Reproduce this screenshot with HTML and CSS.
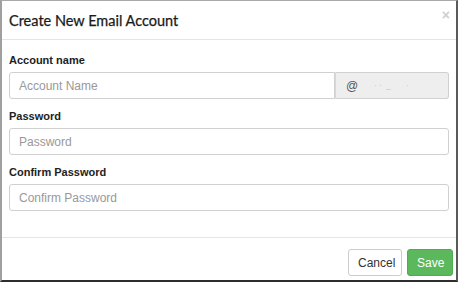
FILE: index.html
```html
<!DOCTYPE html>
<html lang="en">
<head>
    <meta charset="UTF-8">
    <meta name="viewport" content="width=device-width, initial-scale=1.0">
    <title>Create New Email Account</title>
    <link rel="stylesheet" href="styles.css">
</head>
<body>
    <div class="modal">
        <div class="modal-header">
            <h4 class="modal-title">Create New Email Account</h4>
            <span class="close">&times;</span>
        </div>

        <div class="modal-body">
            <div class="form-group">
                <label for="account-name">Account name</label>
                <div class="input-group">
                    <input type="text" id="account-name" placeholder="Account Name">
                    <span class="addon">@<span class="domain">&middot; &middot; &nbsp;_ &nbsp; &nbsp; &nbsp; &middot;</span></span>
                </div>
            </div>

            <div class="form-group">
                <label for="password">Password</label>
                <input type="password" id="password" placeholder="Password">
            </div>

            <div class="form-group">
                <label for="confirm-password">Confirm Password</label>
                <input type="password" id="confirm-password" placeholder="Confirm Password">
            </div>
        </div>

        <div class="modal-footer">
            <button class="btn btn-default">Cancel</button>
            <button class="btn btn-success">Save</button>
        </div>
    </div>
</body>
</html>
```
FILE: styles.css
```css
body {
    margin: 0;
    font-family: "Liberation Sans", Arial, sans-serif;
    background-color: white;
}
.modal {
    box-sizing: border-box;
    width: 458px;
    height: 282px;
    display: flex;
    flex-direction: column;
    background-color: white;
    border-top: 1px solid #a8a8a8;
    border-left: 2px solid #a0a0a0;
    border-right: 2px solid #5a5a5a;
    border-bottom: 2px solid #2e2e2e;
}
.modal-header {
    display: flex;
    justify-content: space-between;
    align-items: center;
    height: 38px;
    padding: 0 6px 0 7px;
    border-bottom: 1px solid #e5e5e5;
}
.modal-title {
    margin: 0;
    font-family: Lato, sans-serif;
    font-size: 14.5px;
    font-weight: normal;
    color: #1a1a1a;
    -webkit-text-stroke: 0.25px #1a1a1a;
}
.close {
    font-size: 14px;
    font-weight: bold;
    color: #cfcfcf;
    margin-top: -10px;
}
.modal-body {
    flex: 1;
    padding: 13px 7px 0 7px;
}
.form-group {
    margin-bottom: 10px;
}
label {
    display: block;
    font-size: 11px;
    font-weight: bold;
    line-height: 15px;
    margin-bottom: 4px;
    color: #222;
}
input {
    box-sizing: border-box;
    display: block;
    width: 100%;
    height: 27px;
    padding: 0 9px;
    font-family: "Liberation Sans", Arial, sans-serif;
    font-size: 12px;
    color: #555;
    border: 1px solid #d0d0d0;
    border-radius: 3px;
    outline: none;
}
input::placeholder {
    color: #999;
}
.input-group {
    display: flex;
}
.input-group input {
    flex: 1;
    border-radius: 3px 0 0 3px;
}
.addon {
    box-sizing: border-box;
    display: flex;
    align-items: center;
    width: 114px;
    height: 27px;
    padding: 0 10px;
    font-size: 12px;
    color: #555;
    background-color: #eee;
    border: 1px solid #d0d0d0;
    border-left: 1px solid #d8d8d8;
    border-radius: 0 3px 3px 0;
}
.domain {
    margin-left: 16px;
    font-size: 8px;
    color: #bbb;
}
.modal-footer {
    display: flex;
    justify-content: flex-end;
    gap: 5px;
    padding: 11px 3px 4px 0;
    border-top: 1px solid #e5e5e5;
}
.btn {
    box-sizing: border-box;
    height: 27px;
    padding: 0 9px;
    font-family: "Liberation Sans", Arial, sans-serif;
    font-size: 12px;
    border-radius: 3px;
    cursor: pointer;
}
.btn-default {
    width: 54px;
    color: #333;
    background-color: white;
    border: 1px solid #ccc;
}
.btn-success {
    width: 46px;
    color: white;
    background-color: #5cb85c;
    border: 1px solid #4cae4c;
}
```
